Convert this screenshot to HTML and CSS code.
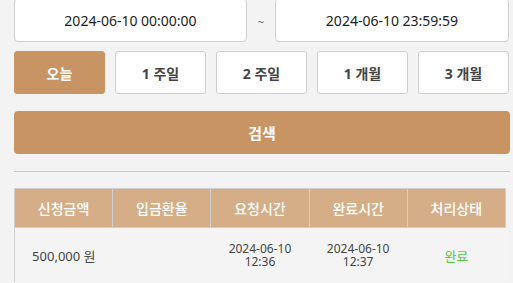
FILE: index.html
```html
<!DOCTYPE html>
<html lang="ko">
<head>
<meta charset="utf-8">
<link rel="stylesheet" href="styles.css">
</head>
<body>
<div class="page">
  <div class="dates">
    <div class="date-input">2024-06-10 00:00:00</div>
    <div class="tilde">~</div>
    <div class="date-input">2024-06-10 23:59:59</div>
  </div>
  <div class="ranges">
    <button class="range active">오늘</button>
    <button class="range">1 주일</button>
    <button class="range">2 주일</button>
    <button class="range">1 개월</button>
    <button class="range">3 개월</button>
  </div>
  <button class="search">검색</button>
  <hr class="divider">
  <table class="list">
    <thead>
      <tr>
        <th>신청금액</th>
        <th>입금환율</th>
        <th>요청시간</th>
        <th>완료시간</th>
        <th>처리상태</th>
      </tr>
    </thead>
    <tbody>
      <tr>
        <td class="amount">500,000 원</td>
        <td></td>
        <td class="time"><span class="line">2024-06-10</span><span class="line">12:36</span></td>
        <td class="time"><span class="line">2024-06-10</span><span class="line">12:37</span></td>
        <td class="status">완료</td>
      </tr>
    </tbody>
  </table>
</div>
</body>
</html>
```
FILE: styles.css
```css
html, body {
  margin: 0;
  padding: 0;
  background: #f3f3f3;
  font-family: "Noto Sans", "Noto Sans CJK KR", sans-serif;
  overflow: hidden;
}
.page {
  padding: 0 3px 0 14px;
  margin-top: -2px;
}
.dates {
  display: grid;
  grid-template-columns: 233px 28px 1fr;
  margin-right: 1px;
}
.date-input {
  height: 42px;
  background: #fff;
  border: 1px solid #cfcfcf;
  border-radius: 4px;
  display: flex;
  align-items: center;
  justify-content: center;
  font-size: 14px;
  color: #222;
}
.tilde {
  display: flex;
  align-items: center;
  justify-content: center;
  font-size: 11px;
  color: #666;
  padding-top: 2px;
}
.ranges {
  display: grid;
  grid-template-columns: repeat(5, 1fr);
  gap: 10px;
  margin: 9px 1px 0 0;
}
.range {
  height: 43px;
  background: #fff;
  border: 1px solid #cfcfcf;
  border-radius: 3px;
  font-family: inherit;
  font-size: 14px;
  font-weight: bold;
  color: #444;
  padding: 0;
}
.range.active {
  background: #c89464;
  border-color: #c89464;
  color: #fff;
}
.search {
  display: block;
  width: 100%;
  height: 43px;
  margin-top: 17px;
  background: #c89464;
  border: none;
  border-radius: 4px;
  color: #fff;
  font-family: inherit;
  font-size: 15px;
  font-weight: bold;
}
.divider {
  border: none;
  border-top: 1px solid #cbcbcb;
  margin: 17px 0 0 0;
  height: 0;
}
.list {
  margin-top: 16px;
  width: 492px;
  border-collapse: collapse;
  table-layout: fixed;
}
.list th {
  height: 38px;
  background: #d5ae88;
  color: #fff;
  font-weight: 500;
  font-size: 14px;
  border: 1px solid #cfcfcf;
  padding: 0;
}
.list th + th {
  border-left: 1px solid #e6d6c6;
}
.list td {
  height: 54px;
  border-left: 1px solid #cfcfcf;
  border-top: 1px solid #cfcfcf;
  text-align: center;
  padding: 0;
  color: #444;
  font-size: 13px;
  background: #f4f4f4;
}
.list td + td {
  border-left: none;
}
.list td.time {
  font-size: 12px;
  color: #444;
}
.line {
  display: block;
  height: 13px;
  line-height: 13px;
  overflow: visible;
}
.list td.status {
  color: #55cc44;
}
```
